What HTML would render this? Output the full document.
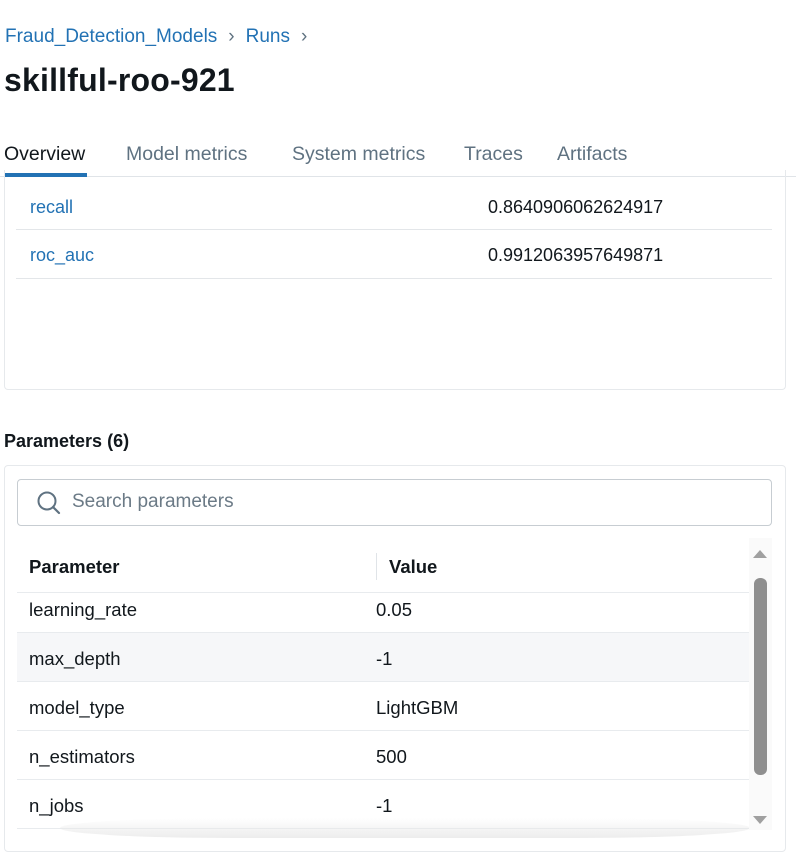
<!DOCTYPE html>
<html><head><meta charset="utf-8"><style>
body{margin:0;width:796px;height:856px;overflow:hidden;background:#fff;font-family:"Liberation Sans",sans-serif;color:#11171c;position:relative}
.a{position:absolute}
.bc{left:5px;top:26px;font-size:19px;color:#2272b4}
.bc span{color:#5f7281;margin:0 11px}
h1{position:absolute;left:4px;top:62px;margin:0;font-size:32px;font-weight:600;letter-spacing:0.2px}
.tabs{top:143px;left:0;width:796px;height:33px;border-bottom:1px solid #e0e4e8;font-size:19.5px;color:#5f7281}
.tabs div{position:absolute;top:0;white-space:nowrap}
.card{border:1px solid #e6e9ec;border-radius:4px}
.row{position:absolute;left:16px;width:756px;border-bottom:1px solid #e3e6e9;font-size:18px}
.lnk{color:#2272b4}
.pr{position:absolute;left:17px;width:732px;height:48px;border-bottom:1px solid #e8ebee;font-size:18.5px}
.pr div{position:absolute;top:15px}
</style></head><body>
<div class="a bc">Fraud_Detection_Models<span>›</span>Runs<span>›</span></div>
<h1>skillful-roo-921</h1>
<div class="a tabs">
<div style="left:4px;color:#11171c">Overview</div>
<div style="left:4px;top:30px;width:83px;height:4px;background:#2272b4"></div>
<div style="left:126px">Model metrics</div>
<div style="left:292px">System metrics</div>
<div style="left:464px">Traces</div>
<div style="left:557px">Artifacts</div>
</div>
<div class="a card" style="left:4px;top:170px;width:780px;height:219px;border-top:none;border-radius:0 0 4px 4px"></div>
<div class="row" style="top:180px;height:49px"><div class="a lnk" style="left:14px;top:17px">recall</div><div class="a" style="left:472px;top:17px">0.8640906062624917</div></div>
<div class="row" style="top:230px;height:48px"><div class="a lnk" style="left:14px;top:15px">roc_auc</div><div class="a" style="left:472px;top:15px">0.9912063957649871</div></div>
<div class="a" style="left:4px;top:431px;font-size:18px;font-weight:600">Parameters (6)</div>
<div class="a card" style="left:4px;top:465px;width:780px;height:385px"></div>
<div class="a" style="left:17px;top:479px;width:753px;height:45px;border:1px solid #c7cdd2;border-radius:4px"></div>
<svg class="a" style="left:36px;top:490px" width="26" height="26" viewBox="0 0 26 26"><circle cx="11" cy="11" r="8.5" fill="none" stroke="#5f7281" stroke-width="2"/><path d="M17 17L23 23" stroke="#5f7281" stroke-width="2.2" stroke-linecap="round"/></svg>
<div class="a" style="left:72px;top:491px;font-size:19px;color:#6b7a86">Search parameters</div>
<div class="pr" style="top:544px;font-weight:600"><div style="left:12px;top:12px">Parameter</div><div style="left:359px;top:9px;width:1px;height:27px;background:#e0e4e8"></div><div style="left:372px;top:12px">Value</div></div>
<div class="pr" style="top:593px;height:39px"><div style="left:12px;top:6px">learning_rate</div><div style="left:359px;top:6px">0.05</div></div>
<div class="pr" style="top:633px;background:#f6f7f9"><div style="left:12px">max_depth</div><div style="left:359px">-1</div></div>
<div class="pr" style="top:682px"><div style="left:12px">model_type</div><div style="left:359px">LightGBM</div></div>
<div class="pr" style="top:731px"><div style="left:12px">n_estimators</div><div style="left:359px">500</div></div>
<div class="pr" style="top:780px"><div style="left:12px">n_jobs</div><div style="left:359px">-1</div></div>
<div class="a" style="left:60px;top:818px;width:690px;height:20px;background:linear-gradient(#fff0,#e8e8e8);border-radius:50%/100%;opacity:.8"></div>
<div class="a" style="left:749px;top:538px;width:23px;height:292px;background:#fafafa"></div>
<div class="a" style="left:753px;top:550px;width:0;height:0;border-left:7px solid transparent;border-right:7px solid transparent;border-bottom:8px solid #a0a0a0"></div>
<div class="a" style="left:754px;top:578px;width:13px;height:197px;background:#8f8f8f;border-radius:6px"></div>
<div class="a" style="left:753px;top:816px;width:0;height:0;border-left:7px solid transparent;border-right:7px solid transparent;border-top:8px solid #a0a0a0"></div>
</body></html>
